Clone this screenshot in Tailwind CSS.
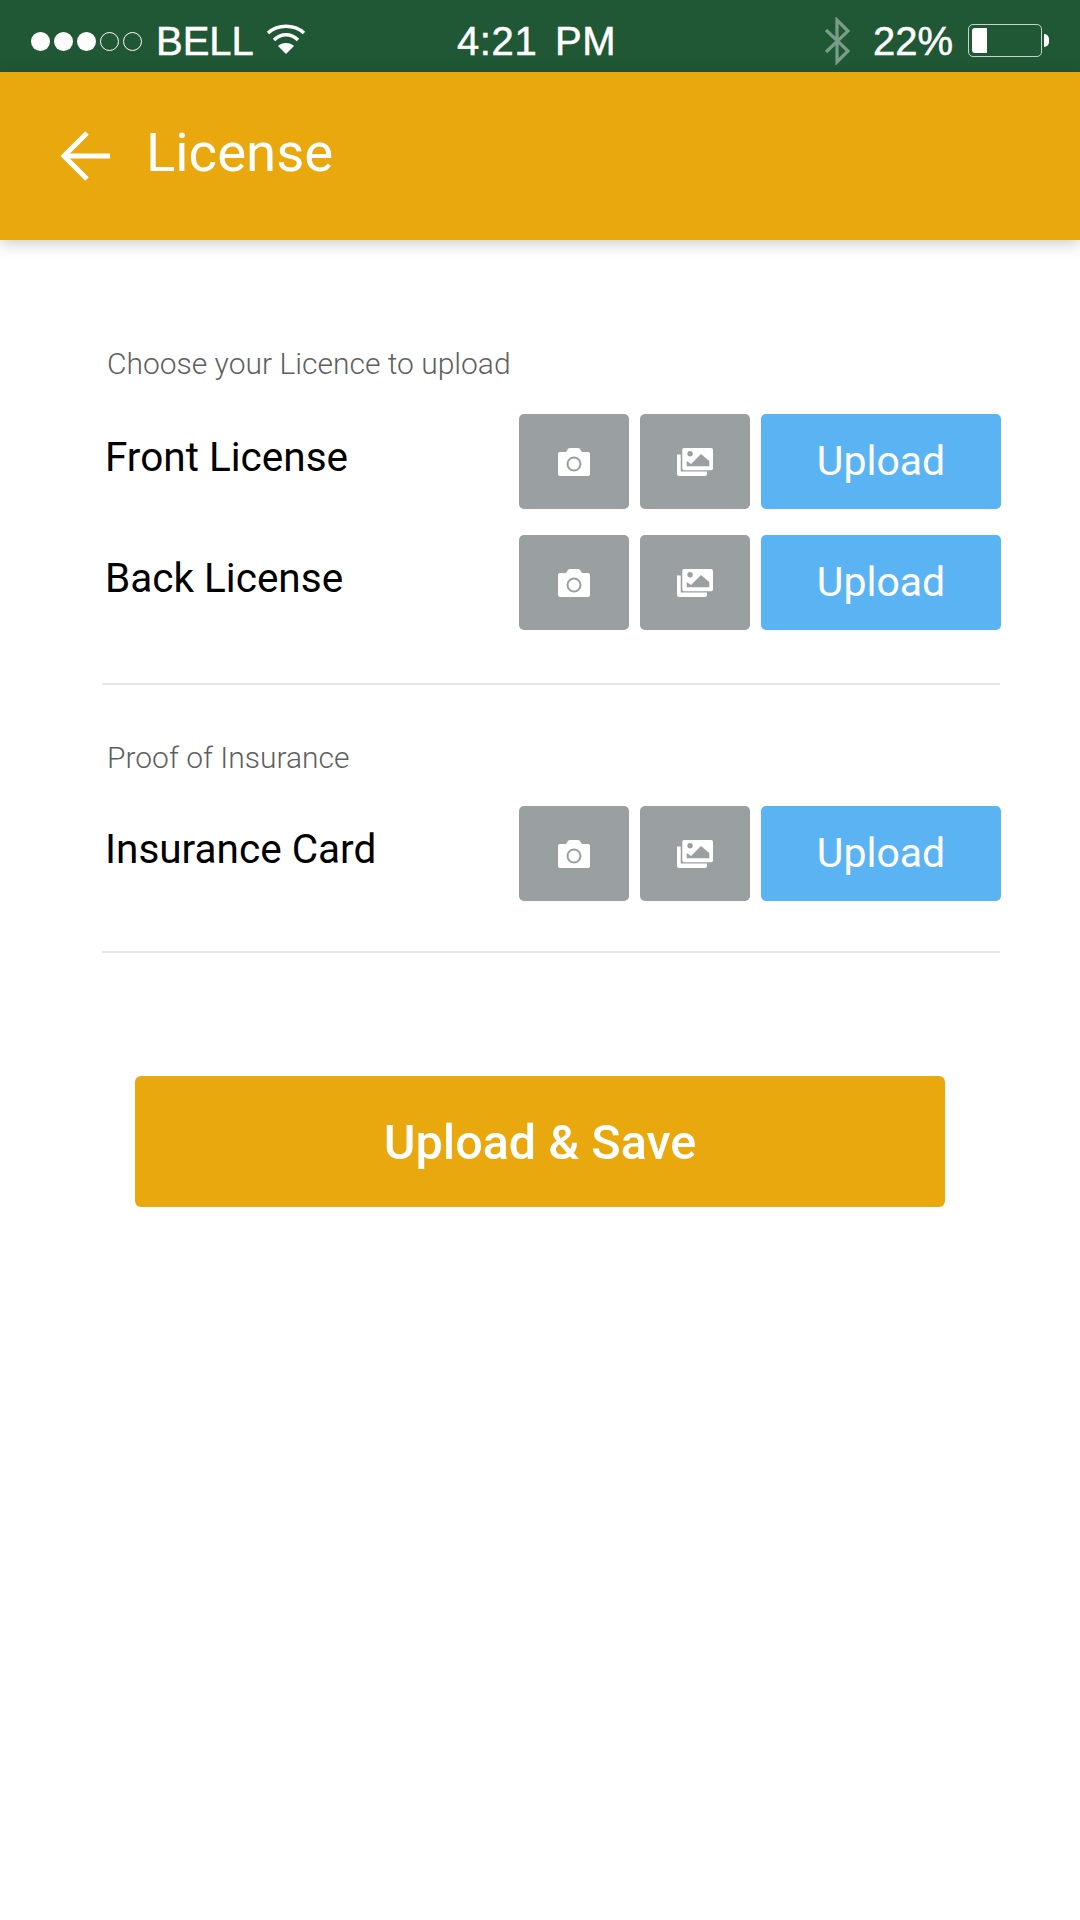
<!DOCTYPE html>
<html lang="en">
<head>
  <meta charset="UTF-8">
  <title>License</title>
  <script src="https://cdn.jsdelivr.net/npm/@tailwindcss/browser@4"></script>
</head>
<body class="bg-white font-['Roboto',sans-serif]">
  <div class="w-[1080px] h-[1920px] flex flex-col overflow-hidden">
    <!-- status bar -->
    <div class="h-[72px] shrink-0 bg-[#205735] text-white font-['Liberation_Sans',sans-serif] text-[40px] [-webkit-text-stroke:0.5px_white] flex items-center pt-[10px] pl-[31px]">
      <div class="w-[426px] shrink-0 flex items-center">
        <div class="flex gap-[4px]">
          <span class="w-[19px] h-[19px] rounded-full bg-white"></span>
          <span class="w-[19px] h-[19px] rounded-full bg-white"></span>
          <span class="w-[19px] h-[19px] rounded-full bg-white"></span>
          <span class="w-[19px] h-[19px] rounded-full border border-white"></span>
          <span class="w-[19px] h-[19px] rounded-full border border-white"></span>
        </div>
        <span class="ml-[14px] leading-[60px]">BELL</span>
        <svg class="ml-[12px] -mt-[5px]" width="40" height="32" viewBox="0 0 40 32" fill="none" stroke="white" stroke-width="3.4">
          <path d="M2 10 C12 1 28 1 38 10"/>
          <path d="M8 17 C15 10 25 10 32 17"/>
          <path d="M20 31 L12 23 C16 19 24 19 28 23 Z" fill="white" stroke="none"/>
        </svg>
      </div>
      <span class="leading-[60px] [word-spacing:6px] tracking-[0.6px]">4:21 PM</span>
      <svg class="ml-auto mr-[-2px] -mt-[1px]" width="26" height="48" viewBox="0 0 26 48" fill="none" stroke="#7a9d8a" stroke-width="3.2">
        <path d="M2 35 L24 14 L13 3 V45 L24 34 L2 13"/>
      </svg>
      <span class="ml-[25px] leading-[60px]">22%</span>
      <div class="ml-[15px] mr-[38px] relative -mt-[2px]">
        <div class="w-[74px] h-[33px] rounded-[5px] border border-[#c5d4ca] p-[3px]">
          <div class="w-[15px] h-full bg-white rounded-l-[3px]"></div>
        </div>
        <div class="absolute -right-[7px] top-[10px] w-[5px] h-[13px] bg-white rounded-r-full"></div>
      </div>
    </div>

    <!-- app bar -->
    <header class="h-[168px] shrink-0 bg-[#e8a80e] flex items-center pl-[60px] shadow-[0_4px_14px_rgba(0,0,0,0.2)] relative z-10">
      <svg width="50" height="50" viewBox="0 0 50 50" fill="none" stroke="white" stroke-width="5" class="-mt-[1px]">
        <path d="M50 25 H4"/>
        <path d="M27 2 L4 25 L27 48"/>
      </svg>
      <h1 class="ml-[36px] text-[54.5px] text-white font-normal leading-none -mt-[8px]">License</h1>
    </header>

    <!-- form -->
    <main class="pl-[102px] pr-[80px]">
      <section class="pt-[103px] h-[445px] border-b-2 border-[#e8e8e8]">
        <p class="pl-[5px] text-[30px] font-light text-[#5f5f5f] leading-[42px]">Choose your Licence to upload</p>
        <div class="mt-[29px] mr-[-1px] flex items-start h-[95px]">
          <span class="pl-[3px] w-[417px] text-[40.5px] text-black leading-[87px]">Front License</span>
          <button class="w-[110px] h-[95px] rounded-[5px] bg-[#9a9fa2] flex items-center justify-center">
            <svg width="32" height="28" viewBox="0 0 32 28"><path fill-rule="evenodd" fill="white" d="M2 4 H8 L10 1 Q10.5 0 12 0 H20 Q21.5 0 22 1 L24 4 H30 Q32 4 32 6 V26 Q32 28 30 28 H2 Q0 28 0 26 V6 Q0 4 2 4 Z M16 8.5 A7.5 7.5 0 1 0 16 23.5 A7.5 7.5 0 1 0 16 8.5 Z M16 10.5 A5.5 5.5 0 1 1 16 21.5 A5.5 5.5 0 1 1 16 10.5 Z"/></svg>
          </button>
          <button class="ml-[11px] w-[110px] h-[95px] rounded-[5px] bg-[#9a9fa2] flex items-center justify-center">
            <svg width="36" height="28" viewBox="0 0 36 28"><path fill="white" fill-rule="evenodd" d="M7 0 H34 Q36 0 36 2 V20.5 Q36 22.3 34 22.3 H7 Q5.3 22.3 5.3 20.5 V2 Q5.3 0 7 0 Z M9.7 18.3 H32.3 V13 L24 6 L14 16 L9.7 13 Z M13 3 A2.7 2.7 0 1 0 13.1 8.4 A2.7 2.7 0 1 0 13 3 Z M0 6.5 H3.7 V23.5 H30 V26 Q30 28 28 28 H2 Q0 28 0 26 Z"/></svg>
          </button>
          <button class="ml-[11px] w-[240px] h-[95px] rounded-[5px] bg-[#5ab4f4] text-white text-[41px] leading-none">Upload</button>
        </div>
        <div class="mt-[26px] mr-[-1px] flex items-start h-[95px]">
          <span class="pl-[3px] w-[417px] text-[40.5px] text-black leading-[87px]">Back License</span>
          <button class="w-[110px] h-[95px] rounded-[5px] bg-[#9a9fa2] flex items-center justify-center">
            <svg width="32" height="28" viewBox="0 0 32 28"><path fill-rule="evenodd" fill="white" d="M2 4 H8 L10 1 Q10.5 0 12 0 H20 Q21.5 0 22 1 L24 4 H30 Q32 4 32 6 V26 Q32 28 30 28 H2 Q0 28 0 26 V6 Q0 4 2 4 Z M16 8.5 A7.5 7.5 0 1 0 16 23.5 A7.5 7.5 0 1 0 16 8.5 Z M16 10.5 A5.5 5.5 0 1 1 16 21.5 A5.5 5.5 0 1 1 16 10.5 Z"/></svg>
          </button>
          <button class="ml-[11px] w-[110px] h-[95px] rounded-[5px] bg-[#9a9fa2] flex items-center justify-center">
            <svg width="36" height="28" viewBox="0 0 36 28"><path fill="white" fill-rule="evenodd" d="M7 0 H34 Q36 0 36 2 V20.5 Q36 22.3 34 22.3 H7 Q5.3 22.3 5.3 20.5 V2 Q5.3 0 7 0 Z M9.7 18.3 H32.3 V13 L24 6 L14 16 L9.7 13 Z M13 3 A2.7 2.7 0 1 0 13.1 8.4 A2.7 2.7 0 1 0 13 3 Z M0 6.5 H3.7 V23.5 H30 V26 Q30 28 28 28 H2 Q0 28 0 26 Z"/></svg>
          </button>
          <button class="ml-[11px] w-[240px] h-[95px] rounded-[5px] bg-[#5ab4f4] text-white text-[41px] leading-none">Upload</button>
        </div>
      </section>
      <section class="pt-[52px] h-[268px] border-b-2 border-[#e8e8e8]">
        <p class="pl-[5px] text-[30px] font-light text-[#5f5f5f] leading-[42px]">Proof of Insurance</p>
        <div class="mt-[27px] mr-[-1px] flex items-start h-[95px]">
          <span class="pl-[3px] w-[417px] text-[40.5px] text-black leading-[87px]">Insurance Card</span>
          <button class="w-[110px] h-[95px] rounded-[5px] bg-[#9a9fa2] flex items-center justify-center">
            <svg width="32" height="28" viewBox="0 0 32 28"><path fill-rule="evenodd" fill="white" d="M2 4 H8 L10 1 Q10.5 0 12 0 H20 Q21.5 0 22 1 L24 4 H30 Q32 4 32 6 V26 Q32 28 30 28 H2 Q0 28 0 26 V6 Q0 4 2 4 Z M16 8.5 A7.5 7.5 0 1 0 16 23.5 A7.5 7.5 0 1 0 16 8.5 Z M16 10.5 A5.5 5.5 0 1 1 16 21.5 A5.5 5.5 0 1 1 16 10.5 Z"/></svg>
          </button>
          <button class="ml-[11px] w-[110px] h-[95px] rounded-[5px] bg-[#9a9fa2] flex items-center justify-center">
            <svg width="36" height="28" viewBox="0 0 36 28"><path fill="white" fill-rule="evenodd" d="M7 0 H34 Q36 0 36 2 V20.5 Q36 22.3 34 22.3 H7 Q5.3 22.3 5.3 20.5 V2 Q5.3 0 7 0 Z M9.7 18.3 H32.3 V13 L24 6 L14 16 L9.7 13 Z M13 3 A2.7 2.7 0 1 0 13.1 8.4 A2.7 2.7 0 1 0 13 3 Z M0 6.5 H3.7 V23.5 H30 V26 Q30 28 28 28 H2 Q0 28 0 26 Z"/></svg>
          </button>
          <button class="ml-[11px] w-[240px] h-[95px] rounded-[5px] bg-[#5ab4f4] text-white text-[41px] leading-none">Upload</button>
        </div>
      </section>
      <button class="mt-[123px] ml-[33px] w-[810px] h-[131px] rounded-[6px] bg-[#e8a80e] text-white text-[48.5px] font-medium leading-none pt-[3px]">Upload &amp; Save</button>
    </main>
  </div>
</body>
</html>
